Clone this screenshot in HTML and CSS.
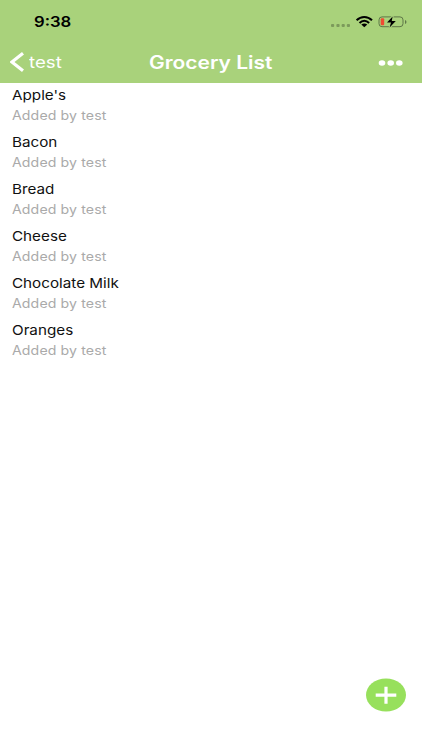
FILE: index.html
```html
<!DOCTYPE html>
<html lang="en">
<head>
<meta charset="utf-8">
<title>Grocery List</title>
<link rel="stylesheet" href="styles.css">
</head>
<body>
<main class="screen">
  <header class="header">
    <div class="status">
      <span class="time wide">9:38</span>
      <svg class="indicators" width="78" height="16" viewBox="0 0 78 16">
        <g fill="#7c9a5b"><rect x="1" y="9" width="3.2" height="3" rx="1"/><rect x="6.4" y="9" width="3.2" height="3" rx="1"/><rect x="11.6" y="9" width="3.2" height="3" rx="1"/><rect x="16.8" y="9" width="3.2" height="3" rx="1"/></g>
        <g fill="none" stroke="#000" stroke-width="2"><path d="M26.600 5.200C31 .8 37.500 .8 42 5.200"/><path d="M29.500 8C32.500 4.900 36.100 4.900 39.100 8"/></g>
        <path d="M31.300 9.600Q34.300 7.200 37.300 9.600L34.300 12.300Z"/>
        <rect x="49" y="1.900" width="24" height="9.800" rx="3" fill="none" stroke="#5f7748"/>
        <path d="M75 5v4q1.500-.5 1.500-2t-1.500-2z" fill="#5f7748"/>
        <rect x="50.700" y="3.300" width="3.500" height="7" rx="1" fill="#f04b32"/>
        <path d="M62.600 1.500L57 7.500h4L59.600 12.500 65.800 6h-4z" stroke="#a9d27b" stroke-width="2"/>
        <path d="M62.600 1.500L57 7.500h4L59.600 12.500 65.800 6h-4z"/>
      </svg>
    </div>
    <nav class="nav">
      <a class="back"><svg width="16" height="22" viewBox="0 0 16 22"><path d="M13 2.200L1.900 11l11.100 8.800" fill="none" stroke="#fff" stroke-width="3.200"/></svg><span class="back-label wide">test</span></a>
      <h1 class="title wide">Grocery List</h1>
      <svg class="more" width="26" height="8" viewBox="0 0 26 8" fill="#fff"><ellipse cx="4" cy="4" rx="3.300" ry="2.800"/><ellipse cx="12.700" cy="4" rx="3.300" ry="2.800"/><ellipse cx="21.300" cy="4" rx="3.300" ry="2.800"/></svg>
    </nav>
  </header>
  <ul class="list">
    <li class="item"><span class="name wide">Apple's</span><span class="by wide">Added by test</span></li>
    <li class="item"><span class="name wide">Bacon</span><span class="by wide">Added by test</span></li>
    <li class="item"><span class="name wide">Bread</span><span class="by wide">Added by test</span></li>
    <li class="item"><span class="name wide">Cheese</span><span class="by wide">Added by test</span></li>
    <li class="item"><span class="name wide">Chocolate Milk</span><span class="by wide">Added by test</span></li>
    <li class="item"><span class="name wide">Oranges</span><span class="by wide">Added by test</span></li>
  </ul>
  <button class="add" aria-label="Add item"><svg width="40" height="34" viewBox="0 0 40 34"><ellipse cx="20" cy="17" rx="20" ry="16.500" fill="#97e05c"/><path d="M9.700 17.200h20.600M20 8.700v17" stroke="#fff" stroke-width="3.200"/></svg></button>
</main>
</body>
</html>
```
FILE: styles.css
```css
* { box-sizing: border-box; }
body { margin: 0; background: #fff; font-family: Inter, "Liberation Sans", sans-serif; }
.screen { position: relative; width: 422px; height: 750px; overflow: hidden; }
.wide { display: block; width: max-content; transform-origin: left center; white-space: nowrap; }
.header { height: 83px; background: #a9d27b; }
.status { height: 42px; padding: 12px 14px 0 34px; display: flex; justify-content: space-between; align-items: flex-start; }
.time { font-size: 14.5px; line-height: 20px; font-weight: 600; transform: scaleX(1.15); }
.indicators { margin-top: 3px; }
.nav { height: 40px; display: grid; grid-template-columns: 138.5px 1fr 26px; align-items: center; padding: 0 18px 0 10px; }
.back { display: flex; align-items: center; gap: 3px; color: #fff; }
.back-label { font-size: 16.5px; line-height: 20px; transform: scaleX(1.13); }
.title { margin: 0; font-size: 18px; line-height: 24px; font-weight: 600; color: #fff; transform: translateY(.6px) scaleX(1.165); }
.more { margin-top: 2px; }
.list { list-style: none; margin: 0; padding: 0 11.5px; }
.item { height: 47px; padding-top: 2px; }
.name { font-size: 13.3px; line-height: 21px; color: #111; transform: scaleX(1.145); }
.by { font-size: 12.4px; line-height: 20px; letter-spacing: .1px; color: #aaa; transform: scaleX(1.14); }
.add { position: absolute; right: 16px; bottom: 38px; width: 40px; height: 34px; padding: 0; border: 0; background: none; }
.add svg { display: block; }
```
